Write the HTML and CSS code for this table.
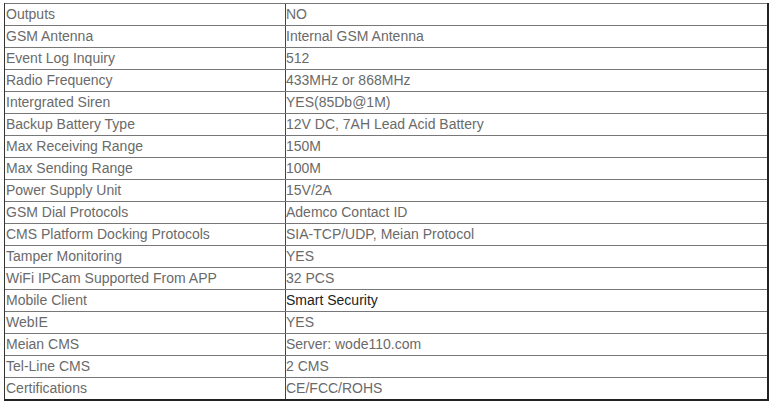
FILE: index.html
```html
<!DOCTYPE html>
<html>
<head>
<meta charset="utf-8">
<link rel="stylesheet" href="styles.css">
</head>
<body>
<div class="spec">
  <div class="row"><div class="k">Outputs</div><div class="v">NO</div></div>
  <div class="row"><div class="k">GSM Antenna</div><div class="v">Internal GSM Antenna</div></div>
  <div class="row"><div class="k">Event Log Inquiry</div><div class="v">512</div></div>
  <div class="row"><div class="k">Radio Frequency</div><div class="v">433MHz or 868MHz</div></div>
  <div class="row"><div class="k">Intergrated Siren</div><div class="v">YES(85Db@1M)</div></div>
  <div class="row"><div class="k">Backup Battery Type</div><div class="v">12V DC, 7AH Lead Acid Battery</div></div>
  <div class="row"><div class="k">Max Receiving Range</div><div class="v">150M</div></div>
  <div class="row"><div class="k">Max Sending Range</div><div class="v">100M</div></div>
  <div class="row"><div class="k">Power Supply Unit</div><div class="v">15V/2A</div></div>
  <div class="row"><div class="k">GSM Dial Protocols</div><div class="v">Ademco Contact ID</div></div>
  <div class="row"><div class="k">CMS Platform Docking Protocols</div><div class="v">SIA-TCP/UDP, Meian Protocol</div></div>
  <div class="row"><div class="k">Tamper Monitoring</div><div class="v">YES</div></div>
  <div class="row"><div class="k">WiFi IPCam Supported From APP</div><div class="v">32 PCS</div></div>
  <div class="row"><div class="k">Mobile Client</div><div class="v dark">Smart Security</div></div>
  <div class="row"><div class="k">WebIE</div><div class="v">YES</div></div>
  <div class="row"><div class="k">Meian CMS</div><div class="v">Server: wode110.com</div></div>
  <div class="row"><div class="k">Tel-Line CMS</div><div class="v">2 CMS</div></div>
  <div class="row"><div class="k">Certifications</div><div class="v">CE/FCC/ROHS</div></div>
</div>
</body>
</html>
```
FILE: styles.css
```css
html, body {
  margin: 0;
  padding: 0;
  background: #fff;
}
body {
  padding: 3px 0 0 4px;
  font-family: "Liberation Sans", Arial, sans-serif;
  font-size: 14px;
  color: #6a6a6a;
}
.spec {
  width: 762px;
  border-left: 1px solid #333;
  border-right: 2px solid #222;
  border-bottom: 2px solid #222;
}
.row {
  display: grid;
  grid-template-columns: 281px 1fr;
  border-top: 1px solid #777;
  height: 21px;
  line-height: 21px;
}
.k {
  padding-left: 1px;
  white-space: nowrap;
  border-right: 1px solid #444;
}
.v {
  white-space: nowrap;
}
.dark {
  color: #222;
}
```
